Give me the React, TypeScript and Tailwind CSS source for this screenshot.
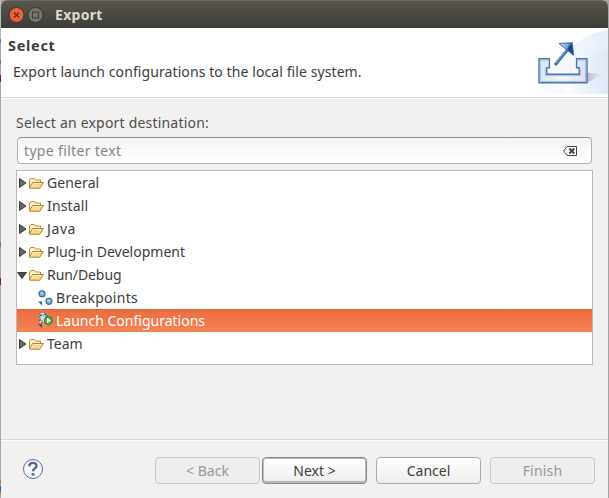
import React from "react";

function Text({ children, className = "" }: { children: React.ReactNode; className?: string }) {
  return <span className={`whitespace-pre leading-[20px] ${className}`}>{children}</span>;
}

function Folder() {
  return (
    <svg width="16" height="16" viewBox="0 0 16 16" className="-ml-px mr-px shrink-0">
      <path d="M1.5 12.5V5L2.8 3.5h3.7L7.8 5h4.7v2.5" fill="#fdf0c8" stroke="#c08a3c" />
      <path d="M1.5 13.2L4.6 7.5h10.9L11.8 13.2z" fill="#f8d888" stroke="#b67f30" strokeLinejoin="round" />
      <path d="M3.2 12.2L5.3 8.5h8.4" fill="none" stroke="#fff0bf" />
    </svg>
  );
}

function Arrow({ open = false }: { open?: boolean }) {
  return (
    <svg width="12" height="12" viewBox="0 0 12 12" className="shrink-0 overflow-visible">
      {open ? (
        <path d="M.5 3.5h9L5 9.5z" fill="#4c4c4c" stroke="#3c3c3c" strokeLinejoin="round" />
      ) : (
        <path d="M2.5 1.5v9L9 6z" fill="#666" stroke="#3c3c3c" strokeLinejoin="round" />
      )}
    </svg>
  );
}

function BreakpointsIcon() {
  return (
    <svg width="16" height="16" viewBox="0 0 16 16" className="-ml-px mr-px shrink-0">
      <circle cx="5" cy="3.8" r="3.2" fill="#72a9cf" stroke="#24618f" />
      <circle cx="4.7" cy="3" r="1.5" fill="#a9d0e6" />
      <circle cx="12" cy="11.3" r="3.2" fill="#72a9cf" stroke="#24618f" />
      <circle cx="11.7" cy="10.5" r="1.5" fill="#a9d0e6" />
      <path d="M1 11.5h4v4z" fill="#205f96" />
    </svg>
  );
}

function LaunchIcon() {
  return (
    <svg width="16" height="16" viewBox="0 0 16 16" className="-ml-px mr-px -mt-[3px] shrink-0">
      <path d="M2.5 1h6l3 3v6H2.5z" fill="#e9eff2" />
      <g fill="none" stroke="#2b6075">
        <circle cx="6" cy="6" r="3.3" strokeDasharray="1.4 1.2" strokeWidth="1.4" />
        <path d="M9 1v3M7 1l4 3M2 2l2 2M1.5 9l2.5-1M3 .8v1.8" />
      </g>
      <circle cx="6" cy="6" r="1.3" fill="#fff" stroke="#7b9ba8" strokeWidth=".6" />
      <circle cx="11.4" cy="8.5" r="4" fill="#4fae50" stroke="#237b3a" />
      <path d="M10 5.8v5.4L13.9 8.5z" fill="#fff" />
      <path d="M1 12h4v4z" fill="#205f96" />
    </svg>
  );
}

function Branch({ label, open, spacing = "" }: { label: string; open?: boolean; spacing?: string }) {
  return (
    <div className="flex h-[23px] items-center">
      <Arrow open={open} />
      <Folder />
      <Text className={`ml-[2px] ${spacing}`}>{label}</Text>
    </div>
  );
}

function ExportBanner() {
  return (
    <svg width="75" height="66" viewBox="0 0 75 66" className="block">
      <defs>
        <linearGradient id="sky" x1="0" x2="1">
          <stop offset="0" stopColor="#fff" />
          <stop offset="1" stopColor="#dce6f6" />
        </linearGradient>
        <linearGradient id="tray" x1="0" x2="1">
          <stop offset="0" stopColor="#dbe5f3" />
          <stop offset=".5" stopColor="#f2f5fb" />
          <stop offset="1" stopColor="#dcdfee" />
        </linearGradient>
        <linearGradient id="head" x1="0" x2="1">
          <stop offset="0" stopColor="#d9e9f7" />
          <stop offset=".55" stopColor="#7ba5cf" />
          <stop offset="1" stopColor="#1d4f92" />
        </linearGradient>
        <linearGradient id="shade" x1="0" x2="1">
          <stop offset="0" stopColor="#bdb4c8" />
          <stop offset="1" stopColor="#dfe0f0" stopOpacity=".2" />
        </linearGradient>
      </defs>
      <path d="M75 1C45 8 31 25 21 36C12 45 5 52 1 66H75z" fill="url(#sky)" opacity=".7" />
      <path d="M75 22C50 24 38 36 31 66H75z" fill="url(#sky)" opacity=".7" />
      <path d="M54 55L71 46L64 45H54z" fill="url(#shade)" />
      <path d="M6 30.8H16.4V39.7H13.8V46.3H46.2V39.7H43.6V30.8H54V54.7H6z" fill="url(#tray)" stroke="#4a74ad" strokeWidth="1.4" />
      <path d="M7.4 53.4V32.2H15M12.3 39.5V47.7H47.6V41M45 32.2H52.6V53.4H7.4" fill="none" stroke="#a4bbdd" strokeWidth=".9" />
      <path d="M22 37L36 20" stroke="#416f9f" strokeWidth="3" />
      <path d="M23 35L34 21.6" stroke="#8fb6d8" strokeWidth=".9" />
      <path d="M26 15.5L39.2 14.7L40.6 27.3z" fill="url(#head)" stroke="#3769a5" />
      <path d="M38.5 15.5L40 26L34 21z" fill="#1b4685" />
    </svg>
  );
}

function DesktopEdge() {
  return (
    <div className="flex w-px shrink-0 flex-col bg-[#a9a8a7]">
      <div className="h-[39px] bg-[#b9b9b9]" />
      <div className="h-[4px] bg-[#3f8a9c]" />
      <div className="mt-[17px] h-[4px] bg-[#8a6a5c]" />
      <div className="mt-[11px] h-[7px] bg-[#7d1355]" />
      <div className="mt-[160px] h-[5px] bg-[#4f8a70]" />
      <div className="mt-[31px] h-[7px] bg-[#7d1355]" />
      <div className="mt-[195px] h-[4px] bg-[#b08430]" />
      <div className="mt-[2px] h-[6px] bg-[#2d62a5]" />
      <div className="mt-[1px] h-[2px] bg-[#b08430]" />
    </div>
  );
}

const btn = "flex h-[27px] w-[105px] items-center justify-center rounded-[4px] border";

export default function App() {
  return (
    <div className="flex h-[498px] w-[609px] overflow-hidden bg-[#a5a5a4] font-['Noto_Sans','Open_Sans',sans-serif] text-[14px] text-[#3c3c3c]">
      <DesktopEdge />
      <div className="flex w-[607px] shrink-0 flex-col overflow-hidden rounded-t-[6px] bg-[#f2f1f0]">
        <div className="flex h-[28px] shrink-0 items-center border-t border-[#6b6962] bg-gradient-to-b from-[#59564e] to-[#3d3c38] pl-[7px]">
          <svg width="38" height="18" viewBox="0 0 38 18">
            <circle cx="8.5" cy="9" r="7.5" fill="#ec6236" stroke="#36322d" />
            <path d="M6 6.5l5 5M11 6.5l-5 5" stroke="#5b2d1f" strokeWidth="1.3" />
            <circle cx="27.5" cy="9" r="7.5" fill="#77766f" stroke="#363530" />
            <rect x="24.5" y="6" width="6" height="6" fill="none" stroke="#3b3a36" />
          </svg>
          <Text className="ml-[9px] font-bold tracking-[0.3px] text-[#dfdbd2]">Export</Text>
        </div>
        <div className="flex h-[69px] shrink-0 justify-between bg-white">
          <div className="flex flex-col pt-[7px]">
            <Text className="ml-[7px] text-[14.5px] font-bold tracking-[0.7px]">Select</Text>
            <Text className="ml-[12px] mt-[7px] tracking-[0.09px]">Export launch configurations to the local file system.</Text>
          </div>
          <ExportBanner />
        </div>
        <div className="h-[2px] shrink-0 border-b border-white bg-[#d8d7d5]" />
        <div className="flex h-[340px] shrink-0 flex-col pl-[15px] pr-[15px] pt-[14px]">
          <Text className="tracking-[0.2px] text-[#4c4c4c]">Select an export destination:</Text>
          <div className="mx-px mt-[4px] flex h-[27px] shrink-0 items-center justify-between rounded-[4px] border border-[#b2b1ae] border-t-[#8f8f8f] bg-gradient-to-b from-[#f4f4f4] to-white pl-[6px] pr-[14px]">
            <Text className="tracking-[0.34px] text-[#858585]">type filter text</Text>
            <svg width="14" height="10" viewBox="0 0 14 10">
              <path d="M4 .5h9.5v9H4L.7 5z" fill="#fff" stroke="#444" />
              <path d="M6.3 2.5l5 5M11.3 2.5l-5 5" stroke="#444" strokeWidth="2" />
            </svg>
          </div>
          <div className="mt-[6px] h-[195px] border border-[#bcb8b4] bg-white">
            <Branch label="General" spacing="tracking-[0.1px]" />
            <Branch label="Install" spacing="tracking-[0.15px]" />
            <Branch label="Java" spacing="tracking-[0.6px]" />
            <Branch label="Plug-in Development" />
            <Branch label="Run/Debug" open spacing="tracking-[-0.08px]" />
            <div className="flex h-[23px] items-center pl-[21px]">
              <BreakpointsIcon />
              <Text className="ml-[2px] tracking-[0.28px]">Breakpoints</Text>
            </div>
            <div className="flex h-[23px] items-center border-t border-[#d9653a] bg-gradient-to-b from-[#eb6e3f] to-[#f58356] pl-[21px] text-white">
              <LaunchIcon />
              <Text className="ml-[2px]">Launch Configurations</Text>
            </div>
            <Branch label="Team" />
          </div>
        </div>
        <div className="h-[2px] shrink-0 border-b border-white bg-[#d8d7d5]" />
        <div className="flex flex-1 items-start pl-[21px] pt-[16px]">
          <svg width="22" height="22" viewBox="0 0 22 22" className="mt-[1px]">
            <circle cx="11" cy="11" r="9.5" fill="#f5f6f8" stroke="#5b6d8f" />
            <path d="M7.3 8.2C7.3 3.7 14.5 3.9 14.5 7.8C14.5 10.4 11 10.3 11 13.3" fill="none" stroke="#52678f" strokeWidth="2.4" />
            <circle cx="11" cy="16.2" r="1.5" fill="#52678f" />
          </svg>
          <div className={`${btn} ml-[111px] border-[#c6c6c5] bg-[#eeeeed] text-[#9a9896]`}><Text>{"< Back"}</Text></div>
          <div className={`${btn} ml-[2px] border-[#858583] bg-gradient-to-b from-white to-[#ededec] shadow-[inset_0_0_0_1px_#bdbdbb,inset_0_-2px_0_#b2b2b0]`}><Text>{"Next >"}</Text></div>
          <div className={`${btn} ml-[9px] border-[#a9a9a7] bg-gradient-to-b from-white to-[#ededec]`}><Text>Cancel</Text></div>
          <div className={`${btn} ml-[9px] border-[#c6c6c5] bg-[#eeeeed] text-[#9a9896]`}><Text className="tracking-[0.2px]">Finish</Text></div>
        </div>
      </div>
    </div>
  );
}
